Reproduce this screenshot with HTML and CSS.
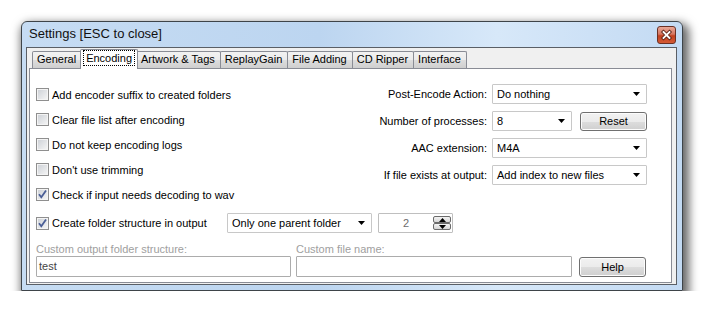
FILE: index.html
```html
<!DOCTYPE html>
<html>
  <head>
    <title>Settings [ESC to close]</title>
    <link rel="stylesheet" href="styles.css">
  </head>

  <body>
    <div class="window">
      <div class="titlebar">
        <span class="title">Settings [ESC to close]</span>
        <span class="close">
          <svg width="19" height="18" viewBox="0 0 19 18">
            <path d="M6.5 6l6 6M12.5 6l-6 6" stroke="#5b2418" stroke-width="3.6" stroke-linecap="square" fill="none"/>
            <path d="M6.5 6l6 6M12.5 6l-6 6" stroke="#fff" stroke-width="1.8" stroke-linecap="square" fill="none"/>
          </svg>
        </span>
      </div>

      <div class="client">
        <div class="tabs">
          <span class="tab">General</span>
          <span class="tab active"><span class="focus">Encoding</span></span>
          <span class="tab">Artwork &amp; Tags</span>
          <span class="tab">ReplayGain</span>
          <span class="tab">File Adding</span>
          <span class="tab">CD Ripper</span>
          <span class="tab">Interface</span>
        </div>

        <div class="panel">
          <div class="top">
            <div class="checks">
              <label class="check"><span class="box"></span>Add encoder suffix to created folders</label>
              <label class="check"><span class="box"></span>Clear file list after encoding</label>
              <label class="check"><span class="box"></span>Do not keep encoding logs</label>
              <label class="check"><span class="box"></span>Don't use trimming</label>
              <label class="check"><span class="box checked"><svg width="11" height="11" viewBox="0 0 11 11"><path d="M2 5.2l2.3 3L9 1.5" fill="none" stroke="#4a5e96" stroke-width="1.8"/></svg></span>Check if input needs decoding to wav</label>
            </div>

            <div class="fields">
              <span class="label">Post-Encode Action:</span>
              <span class="select">Do nothing<svg class="arrow" width="7" height="4" viewBox="0 0 7 4"><path d="M0 0h7L3.5 4z"/></svg></span>

              <span class="label">Number of processes:</span>
              <span class="pair">
                <span class="select short">8<svg class="arrow" width="7" height="4" viewBox="0 0 7 4"><path d="M0 0h7L3.5 4z"/></svg></span>
                <button class="btn">Reset</button>
              </span>

              <span class="label">AAC extension:</span>
              <span class="select">M4A<svg class="arrow" width="7" height="4" viewBox="0 0 7 4"><path d="M0 0h7L3.5 4z"/></svg></span>

              <span class="label">If file exists at output:</span>
              <span class="select">Add index to new files<svg class="arrow" width="7" height="4" viewBox="0 0 7 4"><path d="M0 0h7L3.5 4z"/></svg></span>
            </div>
          </div>

          <div class="structure">
            <label class="check wide"><span class="box checked"><svg width="11" height="11" viewBox="0 0 11 11"><path d="M2 5.2l2.3 3L9 1.5" fill="none" stroke="#4a5e96" stroke-width="1.8"/></svg></span>Create folder structure in output</label>
            <span class="select parent">Only one parent folder<svg class="arrow" width="7" height="4" viewBox="0 0 7 4"><path d="M0 0h7L3.5 4z"/></svg></span>
            <span class="spin">
              <span class="value">2</span>
              <span class="spin-btns">
                <span class="spin-btn"><svg width="7" height="4" viewBox="0 0 7 4"><path d="M0 4h7L3.5 0z"/></svg></span>
                <span class="spin-btn"><svg width="7" height="4" viewBox="0 0 7 4"><path d="M0 0h7L3.5 4z"/></svg></span>
              </span>
            </span>
          </div>

          <div class="custom">
            <div class="group folder">
              <span class="dim">Custom output folder structure:</span>
              <span class="input">test</span>
            </div>
            <div class="group name">
              <span class="dim">Custom file name:</span>
              <span class="input"></span>
            </div>
            <button class="btn help">Help</button>
          </div>
        </div>
      </div>
    </div>
  </body>
</html>
```

FILE: styles.css
```css
body {
  margin: 0;
  background: #fff;
  font: 11px "Liberation Sans", Arial, sans-serif;
  color: #000;
}

.window {
  box-sizing: border-box;
  width: 662px;
  height: 270px;
  margin: 21px 0 0 21px;
  padding: 0 5px 5px 4px;
  display: flex;
  flex-direction: column;
  border: 1px solid #3e4449;
  border-radius: 6px 6px 0 0;
  background: linear-gradient(90deg, #c6dcf3 0%, #bcd5f0 45%, #d7e8f9 72%, #c3daf3 100%);
  box-shadow: 3px 5px 10px 3px rgba(0, 0, 0, 0.6);
}

.titlebar {
  height: 25px;
  display: flex;
  align-items: flex-start;

  & .title {
    padding-left: 3px;
    line-height: 24px;
    font-size: 13px;
    color: #111;
  }

  & .close {
    box-sizing: border-box;
    width: 19px;
    height: 18px;
    margin: 4px 1px 0 auto;
    border: 1px solid #6a3024;
    border-radius: 3px;
    background: linear-gradient(#e9a897, #d47560 45%, #c2401f 55%, #d45a35);
    display: flex;
    align-items: center;
    justify-content: center;

    & svg {
      display: block;
      margin: -1px;
    }
  }
}

.client {
  flex: 1;
  display: flex;
  flex-direction: column;
  border: 1px solid #5a5f66;
  background: #f0f0f0;
  padding: 1px 4px 1px 2px;
}

.tabs {
  display: flex;
  align-items: flex-end;
  height: 19px;
  padding-left: 3px;

  & .tab {
    height: 16px;
    line-height: 15px;
    padding: 0 5px 0 4px;
    border: 1px solid #898c95;
    border-bottom: none;
    border-radius: 2px 2px 0 0;
    background: linear-gradient(#f2f2f2, #ebebeb 50%, #dddddd 51%, #cfcfcf);
    margin-right: -1px;
  }

  & .tab.active {
    height: 19px;
    margin: 0 -2px -1px -1px;
    padding: 0 3px;
    background: #fff;
    position: relative;
    z-index: 1;
    display: flex;
    align-items: flex-start;

    & .focus {
      margin-top: 1px;
      padding: 0 2px;
      line-height: 14px;
      outline: 1px dotted #000;
      outline-offset: 0;
    }
  }
}

.panel {
  flex: 1;
  border: 1px solid #898c95;
  background: #fff;
  padding: 0 0 0 6px;
}

.top {
  display: flex;
  justify-content: space-between;
}

.checks {
  padding-top: 13px;
}

.check {
  display: flex;
  align-items: center;
  height: 25px;
  white-space: nowrap;

  & .box {
    box-sizing: border-box;
    width: 13px;
    height: 13px;
    margin-right: 3px;
    border: 1px solid #8f8f8f;
    box-shadow: inset 0 0 0 1px #f4f4f4;
    background: linear-gradient(135deg, #cbcfd5, #f7f7f7);
    display: flex;
    align-items: center;
    justify-content: center;
  }
}

.check.wide {
  width: 191px;
  height: 20px;
}

.fields {
  padding: 15px 24px 0 0;
  display: grid;
  grid-template-columns: auto 155px;
  grid-auto-rows: 20px;
  column-gap: 5px;
  row-gap: 7px;
  align-items: center;

  & .label {
    text-align: right;
  }

  & .pair {
    display: flex;
    align-items: center;
    gap: 8px;
  }
}

.select {
  box-sizing: border-box;
  height: 20px;
  padding: 0 6px 0 4px;
  display: flex;
  align-items: center;
  justify-content: space-between;
  border: 1px solid #c8c8c8;
  border-radius: 1px;
  background: #fff;

  & .arrow {
    fill: #000;
  }
}

.select.short {
  width: 80px;
}

.btn {
  box-sizing: border-box;
  width: 67px;
  height: 19px;
  padding: 0;
  font: inherit;
  color: #000;
  border: 1px solid #707070;
  border-radius: 3px;
  background: linear-gradient(#f2f2f2, #ebebeb 50%, #dddddd 51%, #cfcfcf);
  box-shadow: inset 0 0 0 1px #fcfcfc;
}

.structure {
  display: flex;
  align-items: center;
  height: 20px;
  margin-top: 6px;

  & .select.parent {
    width: 145px;
  }

  & .spin {
    box-sizing: border-box;
    width: 75px;
    height: 20px;
    margin-left: 6px;
    display: flex;
    align-items: center;
    border: 1px solid #bfbfbf;
    border-radius: 1px;

    & .value {
      flex: 1;
      text-align: center;
      color: #6d6d6d;
    }
  }

  & .spin-btns {
    display: flex;
    flex-direction: column;
    margin-right: 1px;
  }

  & .spin-btn {
    box-sizing: border-box;
    width: 18px;
    height: 7px;
    border: 1px solid #6b6b6b;
    border-radius: 2px;
    background: linear-gradient(#f4f4f4, #d6d6d6);
    display: flex;
    align-items: center;
    justify-content: center;
  }
}

.custom {
  display: flex;
  align-items: flex-end;
  margin-top: 10px;
  gap: 5px;

  & .group {
    display: flex;
    flex-direction: column;
  }

  & .folder {
    width: 255px;
  }

  & .name {
    width: 276px;
  }

  & .dim {
    line-height: 13px;
    color: #a0a0a0;
  }

  & .input {
    box-sizing: border-box;
    height: 21px;
    padding: 0 2px;
    line-height: 19px;
    border: 1px solid #acacac;
    border-radius: 1px;
    color: #444;
  }

  & .help {
    height: 20px;
    margin-left: 2px;
  }
}
```
